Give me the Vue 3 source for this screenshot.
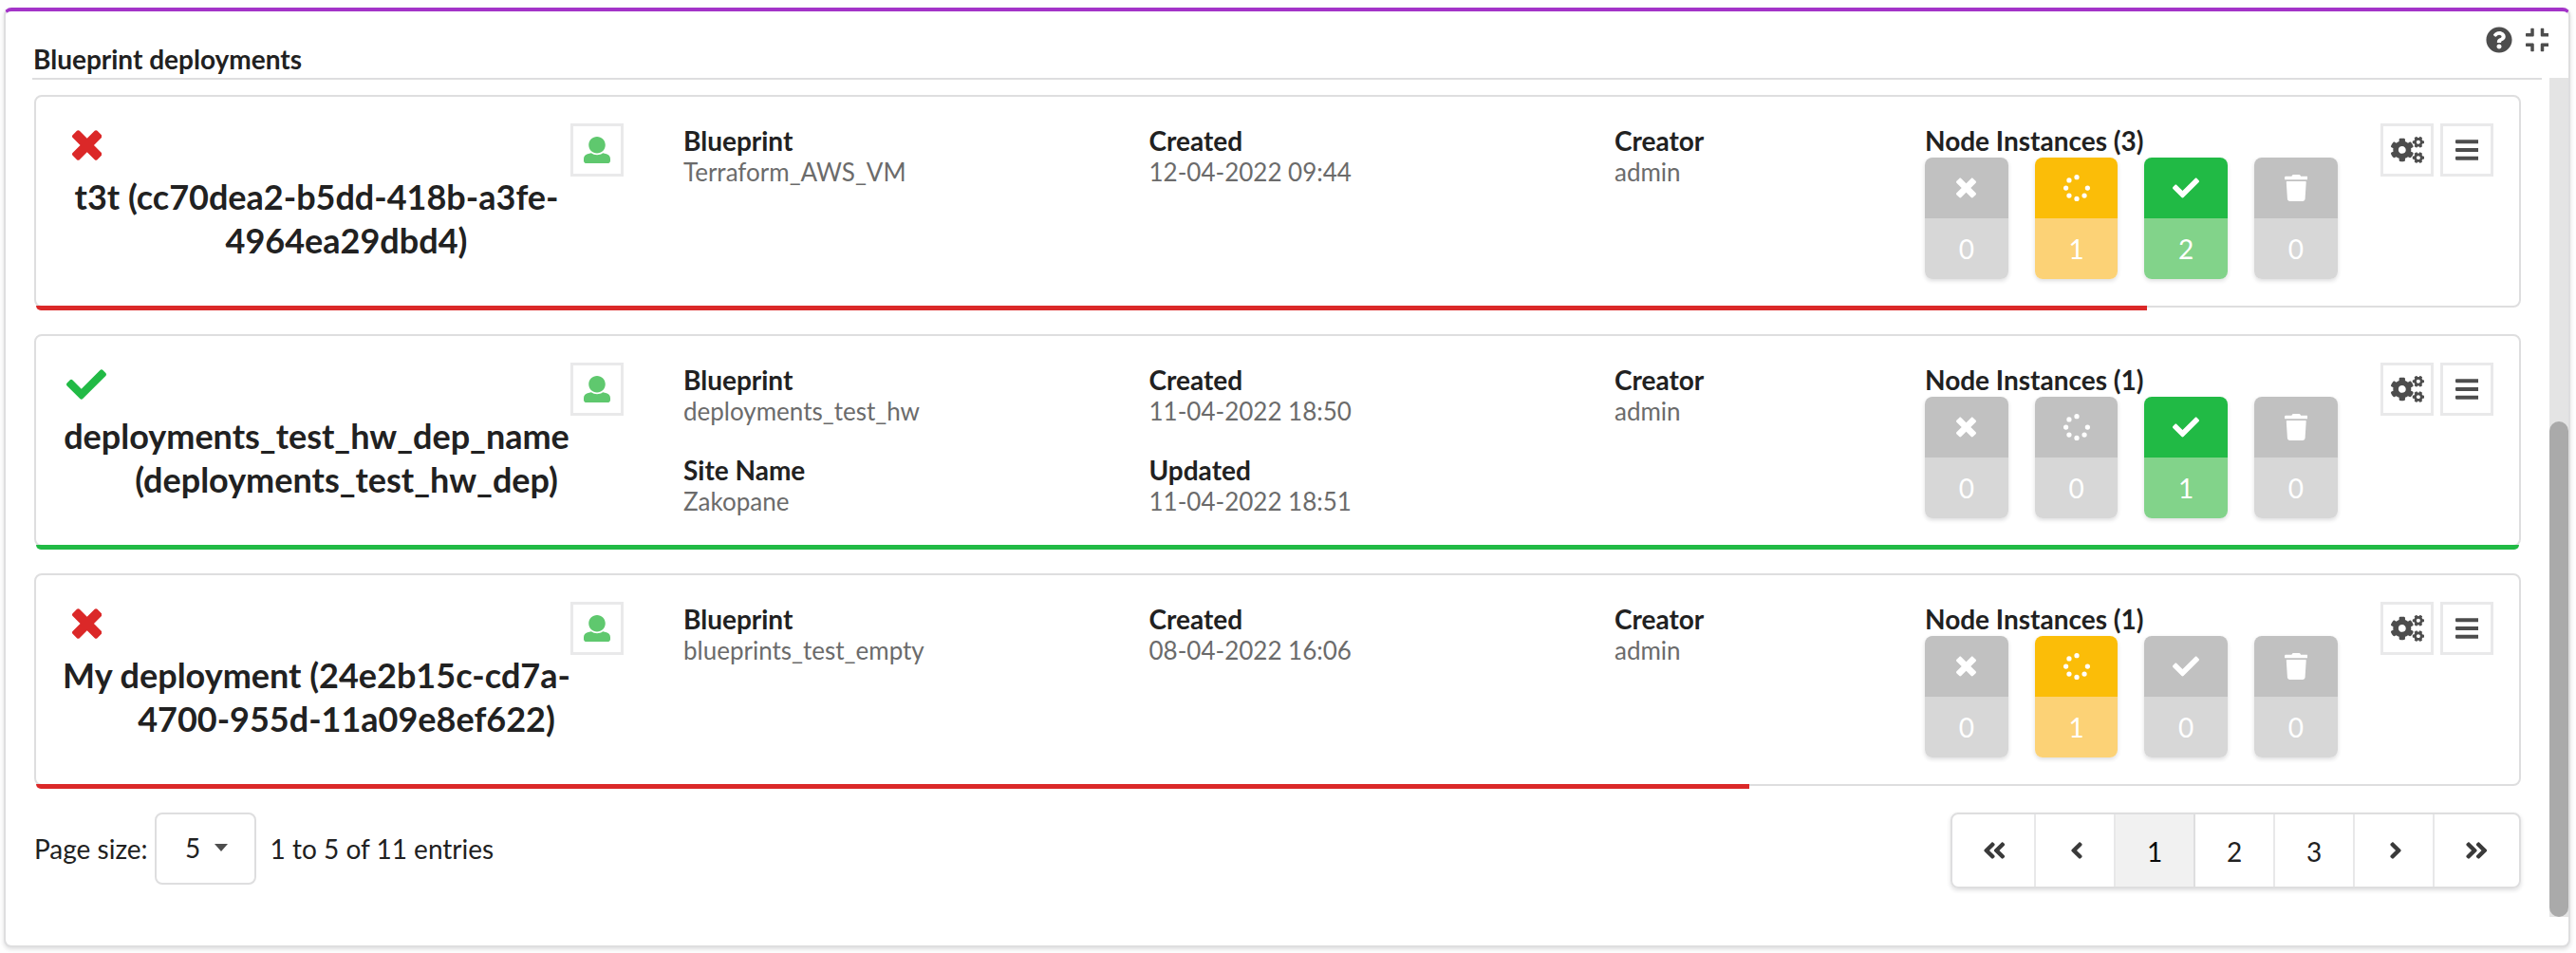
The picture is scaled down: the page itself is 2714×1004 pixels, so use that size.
<script setup>
import { h } from 'vue'

const shapes = {
  times: [384, 'M323.1 441l53.9-53.9c9.4-9.4 9.4-24.5 0-33.9L279.8 256l97.2-97.2c9.4-9.4 9.4-24.5 0-33.9L323.1 71c-9.4-9.4-24.5-9.4-33.9 0L192 168.2 94.8 71c-9.4-9.4-24.5-9.4-33.9 0L7 124.9c-9.4 9.4-9.4 24.5 0 33.9l97.2 97.2L7 353.2c-9.4 9.4-9.4 24.5 0 33.9L60.9 441c9.4 9.4 24.5 9.4 33.9 0l97.2-97.2 97.2 97.2c9.3 9.3 24.5 9.3 33.9 0z'],
  check: [512, 'M173.898 439.404l-166.4-166.4c-9.997-9.997-9.997-26.206 0-36.204l36.203-36.204c9.997-9.998 26.207-9.998 36.204 0L192 312.69 432.095 72.596c9.997-9.997 26.207-9.997 36.204 0l36.203 36.204c9.997 9.997 9.997 26.206 0 36.204l-294.4 294.401c-9.998 9.997-26.207 9.997-36.204-.001z'],
  user: [512, 'M256 0c88.366 0 160 71.634 160 160s-71.634 160-160 160S96 248.366 96 160 167.634 0 256 0zm183.283 333.821l-71.313-17.828c-74.923 53.89-165.738 41.864-223.94 0l-71.313 17.828C29.981 344.505 0 382.903 0 426.955V464c0 26.51 21.49 48 48 48h416c26.51 0 48-21.49 48-48v-37.045c0-44.052-29.981-82.45-72.717-93.134z'],
  spinner: [512, 'M208 48a48 48 0 1 0 96 0a48 48 0 1 0 -96 0zM208 464a48 48 0 1 0 96 0a48 48 0 1 0 -96 0zM416 256a48 48 0 1 0 96 0a48 48 0 1 0 -96 0zM0 256a48 48 0 1 0 96 0a48 48 0 1 0 -96 0zM60.9 403.1a48 48 0 1 0 96 0a48 48 0 1 0 -96 0zM355.1 403.1a48 48 0 1 0 96 0a48 48 0 1 0 -96 0zM60.9 108.9a48 48 0 1 0 96 0a48 48 0 1 0 -96 0z'],
  trash: [448, 'M0 84V56c0-13.3 10.7-24 24-24h112l9.4-18.7c4-8.2 12.3-13.3 21.4-13.3h114.3c9.1 0 17.4 5.1 21.5 13.3L312 32h112c13.3 0 24 10.7 24 24v28c0 6.6-5.4 12-12 12H12c-6.6 0-12-5.4-12-12zm415.2 56.7L394.8 467c-1.6 25.3-22.6 45-47.9 45H101.1c-25.3 0-46.3-19.7-47.9-45L32.8 140.7c-.4-6.9 5.1-12.7 12-12.7h358.5c6.8 0 12.3 5.8 11.9 12.7z'],
  bars: [448, 'M16 132h416c8.837 0 16-7.163 16-16V76c0-8.837-7.163-16-16-16H16C7.163 60 0 67.163 0 76v40c0 8.837 7.163 16 16 16zm0 160h416c8.837 0 16-7.163 16-16v-40c0-8.837-7.163-16-16-16H16c-8.837 0-16 7.163-16 16v40c0 8.837 7.163 16 16 16zm0 160h416c8.837 0 16-7.163 16-16v-40c0-8.837-7.163-16-16-16H16c-8.837 0-16 7.163-16 16v40c0 8.837 7.163 16 16 16z'],
  cogs: [640, 'M512.1 191l-8.2 14.3c-3 5.3-9.4 7.5-15.1 5.4-11.8-4.4-22.6-10.7-32.1-18.6-4.6-3.8-5.8-10.5-2.8-15.7l8.2-14.3c-6.9-8-12.3-17.3-15.9-27.4h-16.5c-6 0-11.2-4.3-12.2-10.3-2-12-2.1-24.6 0-37.1 1-6 6.2-10.4 12.2-10.4h16.5c3.6-10.1 9-19.4 15.9-27.4l-8.2-14.3c-3-5.2-1.9-11.9 2.8-15.7 9.5-7.9 20.4-14.2 32.1-18.6 5.7-2.1 12.1.1 15.1 5.4l8.2 14.3c10.5-1.9 21.2-1.9 31.7 0L552 6.3c3-5.3 9.4-7.5 15.1-5.4 11.8 4.4 22.6 10.7 32.1 18.6 4.6 3.8 5.8 10.5 2.8 15.7l-8.2 14.3c6.9 8 12.3 17.3 15.9 27.4h16.5c6 0 11.2 4.3 12.2 10.3 2 12 2.1 24.6 0 37.1-1 6-6.2 10.4-12.2 10.4h-16.5c-3.6 10.1-9 19.4-15.9 27.4l8.2 14.3c3 5.2 1.9 11.9-2.8 15.7-9.5 7.9-20.4 14.2-32.1 18.6-5.7 2.1-12.1-.1-15.1-5.4l-8.2-14.3c-10.4 1.9-21.2 1.9-31.7 0zm-10.5-58.8c38.5 29.6 82.4-14.3 52.8-52.8-38.5-29.7-82.4 14.3-52.8 52.8zM386.3 286.1l33.7 16.8c10.1 5.8 14.5 18.1 10.5 29.1-8.9 24.2-26.4 46.4-42.6 65.8-7.4 8.9-20.2 11.1-30.3 5.3l-29.1-16.8c-16 13.7-34.6 24.6-54.9 31.7v33.6c0 11.6-8.3 21.6-19.7 23.6-24.6 4.2-50.4 4.4-75.9 0-11.5-2-20-11.9-20-23.6V418c-20.3-7.2-38.9-18-54.9-31.7L74 403c-10 5.8-22.9 3.6-30.3-5.3-16.2-19.4-33.3-41.6-42.2-65.7-4-10.9.4-23.2 10.5-29.1l33.3-16.8c-3.9-20.9-3.9-42.4 0-63.4L12 205.8c-10.1-5.8-14.6-18.1-10.5-29 8.9-24.2 26-46.4 42.2-65.8 7.4-8.9 20.2-11.1 30.3-5.3l29.1 16.8c16-13.7 34.6-24.6 54.9-31.7V57.1c0-11.5 8.2-21.5 19.6-23.5 24.6-4.2 50.5-4.4 76-.1 11.5 2 20 11.9 20 23.6v33.6c20.3 7.2 38.9 18 54.9 31.7l29.1-16.8c10-5.8 22.9-3.6 30.3 5.3 16.2 19.4 33.2 41.6 42.1 65.8 4 10.9.1 23.2-10 29.1l-33.7 16.8c3.9 21 3.9 42.5 0 63.5zm-117.6 21.1c59.2-77-28.7-164.9-105.7-105.7-59.2 77 28.7 164.9 105.7 105.7zm243.4 182.7l-8.2 14.3c-3 5.3-9.4 7.5-15.1 5.4-11.8-4.4-22.6-10.7-32.1-18.6-4.6-3.8-5.8-10.5-2.8-15.7l8.2-14.3c-6.9-8-12.3-17.3-15.9-27.4h-16.5c-6 0-11.2-4.3-12.2-10.3-2-12-2.1-24.6 0-37.1 1-6 6.2-10.4 12.2-10.4h16.5c3.6-10.1 9-19.4 15.9-27.4l-8.2-14.3c-3-5.2-1.9-11.9 2.8-15.7 9.5-7.9 20.4-14.2 32.1-18.6 5.7-2.1 12.1.1 15.1 5.4l8.2 14.3c10.5-1.9 21.2-1.9 31.7 0l8.2-14.3c3-5.3 9.4-7.5 15.1-5.4 11.8 4.4 22.6 10.7 32.1 18.6 4.6 3.8 5.8 10.5 2.8 15.7l-8.2 14.3c6.9 8 12.3 17.3 15.9 27.4h16.5c6 0 11.2 4.3 12.2 10.3 2 12 2.1 24.6 0 37.1-1 6-6.2 10.4-12.2 10.4h-16.5c-3.6 10.1-9 19.4-15.9 27.4l8.2 14.3c3 5.2 1.9 11.9-2.8 15.7-9.5 7.9-20.4 14.2-32.1 18.6-5.7 2.1-12.1-.1-15.1-5.4l-8.2-14.3c-10.4 1.9-21.2 1.9-31.7 0zM501.6 431c38.5 29.6 82.4-14.3 52.8-52.8-38.5-29.6-82.4 14.3-52.8 52.8z'],
  help: [512, 'M504 256c0 136.997-111.043 248-248 248S8 392.997 8 256C8 119.083 119.043 8 256 8s248 111.083 248 248zM262.655 90c-54.497 0-89.255 22.957-116.549 63.758-3.536 5.286-2.353 12.415 2.715 16.258l34.699 26.31c5.205 3.947 12.621 3.008 16.665-2.122 17.864-22.658 30.113-35.797 57.303-35.797 20.429 0 45.698 13.148 45.698 32.958 0 14.976-12.363 22.667-32.534 33.976C247.128 238.528 216 254.941 216 296v4c0 6.627 5.373 12 12 12h56c6.627 0 12-5.373 12-12v-1.333c0-28.462 83.186-29.647 83.186-106.667 0-58.002-60.165-102-116.531-102zM256 338c-25.365 0-46 20.635-46 46 0 25.364 20.635 46 46 46s46-20.636 46-46c0-25.365-20.635-46-46-46z'],
  compress: [448, 'M436 192H312c-13.3 0-24-10.7-24-24V44c0-6.6 5.4-12 12-12h40c6.6 0 12 5.4 12 12v84h84c6.6 0 12 5.4 12 12v40c0 6.6-5.4 12-12 12zm-276-24V44c0-6.6-5.4-12-12-12h-40c-6.6 0-12 5.4-12 12v84H12c-6.6 0-12 5.4-12 12v40c0 6.6 5.4 12 12 12h124c13.3 0 24-10.7 24-24zm0 300V344c0-13.3-10.7-24-24-24H12c-6.6 0-12 5.4-12 12v40c0 6.6 5.4 12 12 12h84v84c0 6.6 5.4 12 12 12h40c6.6 0 12-5.4 12-12zm192 0v-84h84c6.6 0 12-5.4 12-12v-40c0-6.6-5.4-12-12-12H312c-13.3 0-24 10.7-24 24v124c0 6.6 5.4 12 12 12h40c6.6 0 12-5.4 12-12z'],
  angle: [256, 'M31.7 239l136-136c9.4-9.4 24.6-9.4 33.9 0l22.6 22.6c9.4 9.4 9.4 24.6 0 33.9L127.9 256l96.4 96.4c9.4 9.4 9.4 24.6 0 33.9L201.7 409c-9.4 9.4-24.6 9.4-33.9 0l-136-136c-9.5-9.4-9.5-24.6-.1-34z'],
  angles: [448, 'M223.7 239l136-136c9.4-9.4 24.6-9.4 33.9 0l22.6 22.6c9.4 9.4 9.4 24.6 0 33.9L319.9 256l96.4 96.4c9.4 9.4 9.4 24.6 0 33.9L393.7 409c-9.4 9.4-24.6 9.4-33.9 0l-136-136c-9.5-9.4-9.5-24.6-.1-34zm-192 34l136 136c9.4 9.4 24.6 9.4 33.9 0l22.6-22.6c9.4-9.4 9.4-24.6 0-33.9L127.9 256l96.4-96.4c9.4-9.4 9.4-24.6 0-33.9L201.7 103c-9.4-9.4-24.6-9.4-33.9 0l-136 136c-9.5 9.4-9.5 24.6-.1 34z']
}

const Icon = (props) => {
  const [width, d] = shapes[props.name]
  const size = props.size || 28
  return h(
    'svg',
    { viewBox: `0 0 ${width} 512`, width: (width / 512) * size, height: size, fill: 'currentColor' },
    [h('path', { d })]
  )
}
Icon.props = ['name', 'size']

const kinds = [
  { icon: 'times', color: 'red' },
  { icon: 'spinner', color: 'yellow' },
  { icon: 'check', color: 'green' },
  { icon: 'trash', color: 'grey' }
]

const deployments = [
  {
    ok: false,
    lines: ['t3t (cc70dea2-b5dd-418b-a3fe-', '4964ea29dbd4)'],
    columns: [
      [['Blueprint', 'Terraform_AWS_VM']],
      [['Created', '12-04-2022 09:44']],
      [['Creator', 'admin']]
    ],
    total: 3,
    counts: [0, 1, 2, 0],
    progress: 85
  },
  {
    ok: true,
    lines: ['deployments_test_hw_dep_name', '(deployments_test_hw_dep)'],
    columns: [
      [['Blueprint', 'deployments_test_hw'], ['Site Name', 'Zakopane']],
      [['Created', '11-04-2022 18:50'], ['Updated', '11-04-2022 18:51']],
      [['Creator', 'admin']]
    ],
    total: 1,
    counts: [0, 0, 1, 0],
    progress: 100
  },
  {
    ok: false,
    lines: ['My deployment (24e2b15c-cd7a-', '4700-955d-11a09e8ef622)'],
    columns: [
      [['Blueprint', 'blueprints_test_empty']],
      [['Created', '08-04-2022 16:06']],
      [['Creator', 'admin']]
    ],
    total: 1,
    counts: [0, 1, 0, 0],
    progress: 69
  }
]
</script>

<template>
  <div class="page">
    <section class="widget">
      <header class="widget-header">
        <h5>Blueprint deployments</h5>
        <div class="widget-tools">
          <Icon name="help" />
          <Icon name="compress" />
        </div>
      </header>
      <div class="widget-body">
        <div class="content">
          <article v-for="item in deployments" :key="item.lines[0]" class="card">
            <div class="name">
              <Icon :name="item.ok ? 'check' : 'times'" :size="42" :class="['status', item.ok ? 'ok' : 'failed']" />
              <h3>
                <span v-for="line in item.lines" :key="line">{{ line }}</span>
              </h3>
            </div>
            <button class="square visibility"><Icon name="user" /></button>
            <div v-for="(column, i) in item.columns" :key="i" class="column">
              <dl v-for="field in column" :key="field[0]">
                <dt>{{ field[0] }}</dt>
                <dd>{{ field[1] }}</dd>
              </dl>
            </div>
            <div class="nodes">
              <div class="nodes-title">Node Instances ({{ item.total }})</div>
              <div class="tiles">
                <div v-for="(kind, i) in kinds" :key="kind.icon" class="tile" :class="item.counts[i] ? kind.color : 'grey'">
                  <div class="tile-icon"><Icon :name="kind.icon" /></div>
                  <div class="tile-count">{{ item.counts[i] }}</div>
                </div>
              </div>
            </div>
            <div class="actions">
              <button class="square"><Icon name="cogs" /></button>
              <button class="square"><Icon name="bars" /></button>
            </div>
            <div class="progress">
              <div class="bar" :class="item.ok ? 'ok' : 'failed'" :style="{ width: item.progress + '%' }"></div>
            </div>
          </article>
          <footer class="footer">
            <span>Page size:</span>
            <div class="select"><span>5</span><i class="caret"></i></div>
            <span>1 to 5 of 11 entries</span>
            <nav class="pages">
              <a class="first"><Icon name="angles" /></a>
              <a><Icon name="angle" /></a>
              <a class="active"><span>1</span></a>
              <a><span>2</span></a>
              <a><span>3</span></a>
              <a><Icon name="angle" class="flip" /></a>
              <a class="last"><Icon name="angles" class="flip" /></a>
            </nav>
          </footer>
        </div>
        <div class="scrollbar"><div class="thumb"></div></div>
      </div>
    </section>
  </div>
</template>

<style>
body {
  margin: 0;
  background: #fefefe;
}
</style>

<style scoped>
* {
  box-sizing: border-box;
}
.page {
  width: 2714px;
  height: 1004px;
  padding: 8px 6px 6px 4px;
  overflow: hidden;
  font: 28px/34px Lato, "Liberation Sans", sans-serif;
  color: #212121;
}
svg {
  display: block;
  flex: none;
}
h3,
h5,
dl,
dd {
  margin: 0;
  font-size: inherit;
}
.widget {
  height: 990px;
  background: #fff;
  border: 2px solid #dededf;
  border-top: 4px solid #a333c8;
  border-radius: 8px;
  box-shadow: 0 2px 4px rgba(34, 36, 38, 0.15);
}
.widget-header {
  height: 70px;
  display: flex;
  justify-content: space-between;
  padding: 33px 21px 0 29px;
}
.widget-tools {
  display: flex;
  gap: 14px;
  margin-top: -17.5px;
  color: #4d4d4d;
}
.widget-body {
  height: 884px;
  display: flex;
  justify-content: space-between;
}
.content {
  width: 2644px;
  margin-left: 28px;
  padding: 16px 22px 0 2px;
  border-top: 2px solid #dededf;
}
.scrollbar {
  width: 20px;
  background: #e4e4e4;
  display: flex;
  align-items: flex-end;
}
.thumb {
  width: 20px;
  height: 522px;
  border-radius: 10px;
  background: #aaa;
}
.card {
  position: relative;
  display: flex;
  height: 224px;
  margin-bottom: 28px;
  border: 2px solid #dededf;
  border-radius: 8px;
}
.name {
  width: 535px;
  margin-left: 28px;
  padding-top: 30.3px;
}
.status {
  margin-left: 4px;
}
svg.failed {
  margin-left: 9.6px;
  color: #db2828;
}
svg.ok {
  color: #21ba45;
}
h3 {
  margin-top: 9.4px;
  font-size: 36px;
  line-height: 46px;
  text-align: center;
  white-space: nowrap;
}
h3 span {
  display: block;
}
h3 span + span {
  margin-left: 63px;
}
.square {
  width: 56px;
  height: 56px;
  padding: 0;
  display: flex;
  align-items: center;
  justify-content: center;
  flex: none;
  border: 3px solid #e9e9ea;
  background: #fff;
  color: #4d4d4d;
}
.visibility {
  margin: 28px 63px 0 0;
  color: #5fc86e;
}
.column {
  width: 490.5px;
  padding-top: 29px;
}
.column + .column + .column {
  width: 327px;
}
dt,
.nodes-title {
  font-weight: 700;
}
dl + dl {
  margin-top: 29px;
}
dd {
  font-size: 26px;
  line-height: 32px;
  color: #6b6b6b;
}
.nodes {
  width: 435px;
  padding-top: 29px;
}
.tiles {
  display: flex;
  gap: 28px;
  margin-top: 1px;
}
.tile {
  width: 87.7px;
  border-radius: 8px;
  overflow: hidden;
  box-shadow: 0 2px 4px rgba(34, 36, 38, 0.15);
  color: #fff;
}
.tile-icon,
.tile-count {
  height: 64px;
  display: flex;
  align-items: center;
  justify-content: center;
}
.grey .tile-icon {
  background: #c1c1c1;
}
.grey .tile-count {
  background: #d7d7d7;
}
.yellow .tile-icon {
  background: #fbbd08;
}
.yellow .tile-count {
  background: #fcd276;
}
.green .tile-icon {
  background: #21ba45;
}
.green .tile-count {
  background: #82d38a;
}
.actions {
  display: flex;
  gap: 7px;
  margin: 28px 0 0 45px;
}
.progress {
  position: absolute;
  left: 0;
  right: 0;
  bottom: -5px;
  height: 5px;
  border-radius: 0 0 8px 8px;
  overflow: hidden;
}
.bar {
  height: 5px;
}
.bar.ok {
  background: #21ba45;
}
.bar.failed {
  background: #db2828;
}
.footer {
  display: flex;
  align-items: flex-start;
}
.footer > span {
  margin-top: 21px;
}
.select {
  width: 107px;
  height: 76px;
  margin: 0 15px 0 7px;
  border: 2px solid #dededf;
  border-radius: 8px;
  display: flex;
  align-items: center;
  padding: 0 0 2px 30.5px;
}
.caret {
  margin: 0 0 0 15px;
  border: 7.5px solid transparent;
  border-top: 8px solid #4d4d4d;
  border-bottom: 0;
}
.pages {
  display: flex;
  height: 80px;
  margin-left: auto;
  border: 2px solid #dededf;
  border-radius: 8px;
  overflow: hidden;
  box-shadow: 0 2px 4px rgba(34, 36, 38, 0.15);
}
.pages a {
  width: 84px;
  display: flex;
  align-items: center;
  justify-content: center;
  border-right: 2px solid #e8e8e9;
}
.pages a.first {
  width: 88px;
}
.pages a.last {
  width: 89px;
  border-right: 0;
}
.pages a.active {
  background: #f1f1f1;
  border-right-color: #dededf;
  color: #0a0a0a;
}
.pages a span {
  padding-top: 2px;
}
.pages svg {
  margin-left: 3px;
  color: #3a3a3a;
}
.pages .last svg {
  margin-left: 0;
}
.flip {
  transform: scaleX(-1);
}
</style>
